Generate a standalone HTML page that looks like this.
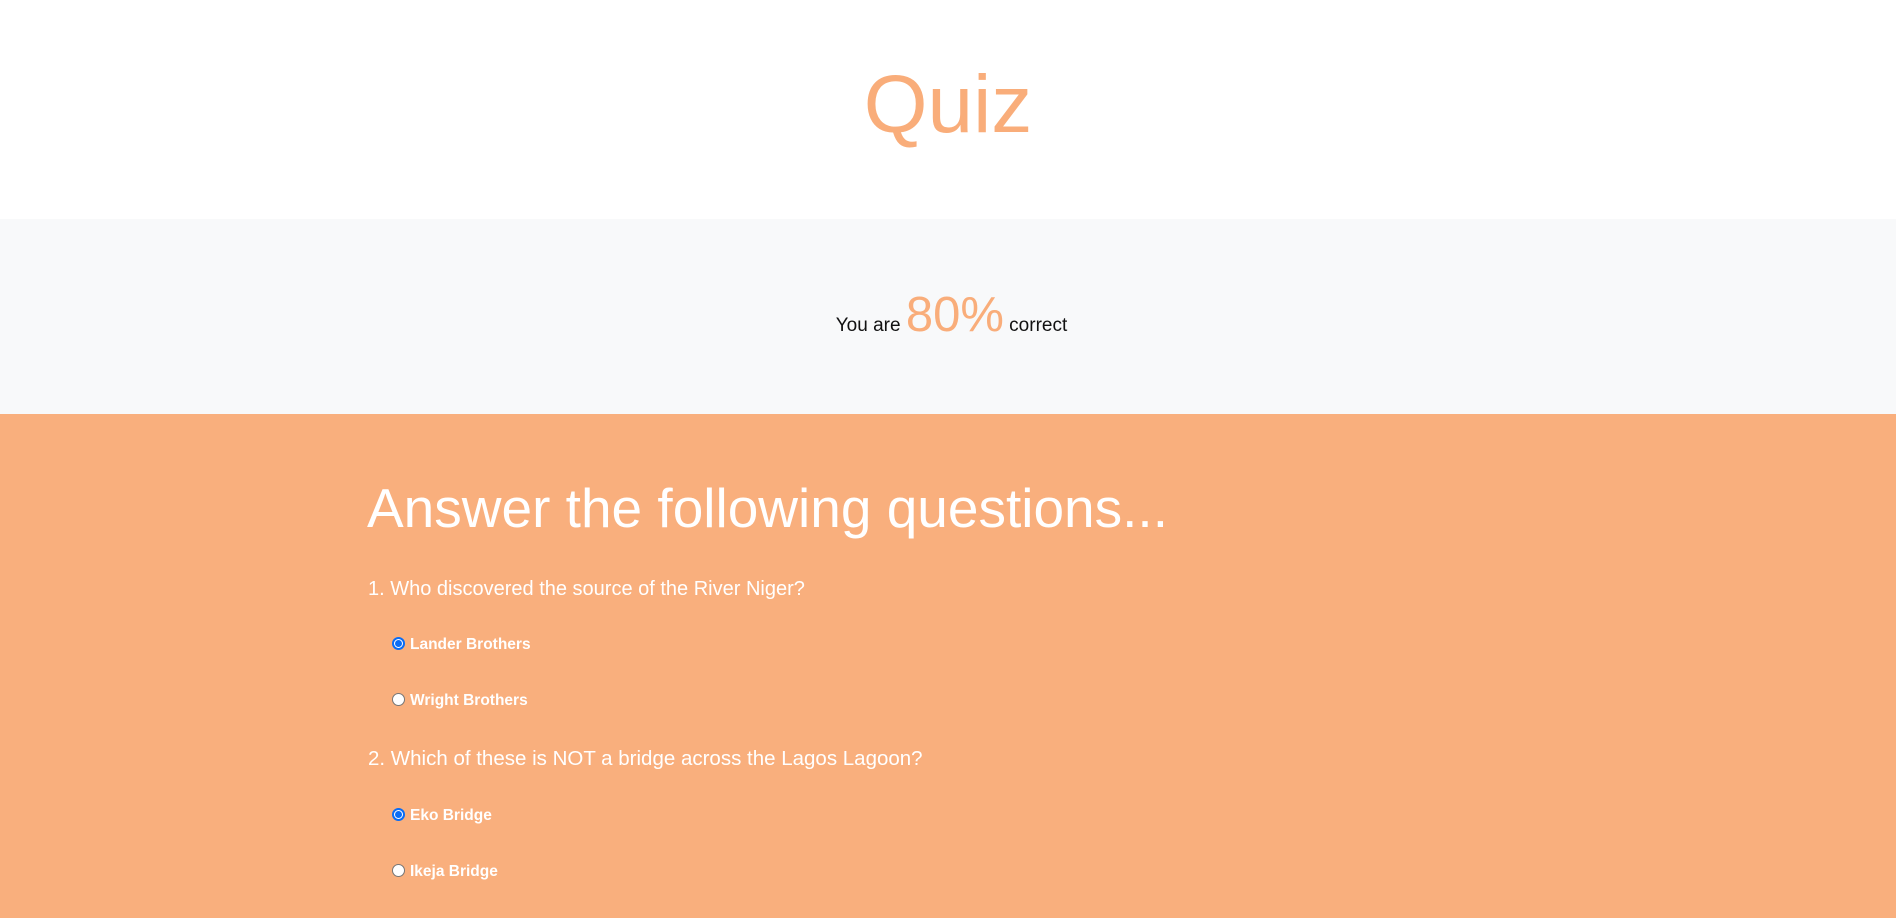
<!DOCTYPE html>
<html><head><meta charset="utf-8"><style>
*{margin:0;padding:0;box-sizing:border-box}
html,body{width:1896px;height:918px;overflow:hidden;background:#fff;font-family:"Liberation Sans",sans-serif}
.a{position:absolute;white-space:nowrap;line-height:1}
.gray{position:absolute;left:0;top:219px;width:1896px;height:195px;background:#f8f9fa}
.or{position:absolute;left:0;top:414px;width:1896px;height:504px;background:#f9af7d}
.w{color:#fff}
.opt{font-size:15.5px;font-weight:600;color:#fff}
.r{position:absolute;width:13px;height:13px;border-radius:50%;background:#fff;border:1px solid #767676}
.r.on{border:2px solid #0a6cf5;background:#fff}
.r.on::after{content:"";position:absolute;left:1px;top:1px;width:7px;height:7px;border-radius:50%;background:#0a6cf5}
</style></head><body>
<div class="a" style="left:0;width:1896px;text-align:center;top:64px;font-size:82px;color:#f9ad7a">Quiz</div>
<div class="gray"></div>
<div class="a" style="left:0;width:1903px;text-align:center;top:291px;font-size:49px;color:#f9ad7a"><span style="font-size:19px;color:#111">You are </span>80%<span style="font-size:19px;color:#111"> correct</span></div>
<div class="or"></div>
<div class="a w" style="left:367px;top:481px;font-size:55px">Answer the following questions...</div>
<div class="a w" style="left:368px;top:579px;font-size:20px">1. Who discovered the source of the River Niger?</div>
<div class="r on" style="left:392px;top:637px"></div>
<div class="a opt" style="left:410px;top:637px">Lander Brothers</div>
<div class="r" style="left:392px;top:693px"></div>
<div class="a opt" style="left:410px;top:693px">Wright Brothers</div>
<div class="a w" style="left:368px;top:749px;font-size:20.5px">2. Which of these is NOT a bridge across the Lagos Lagoon?</div>
<div class="r on" style="left:392px;top:808px"></div>
<div class="a opt" style="left:410px;top:808px">Eko Bridge</div>
<div class="r" style="left:392px;top:864px"></div>
<div class="a opt" style="left:410px;top:864px">Ikeja Bridge</div>
</body></html>
